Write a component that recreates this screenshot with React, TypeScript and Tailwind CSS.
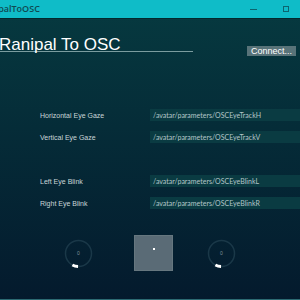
import React from 'react'

function Dial() {
  return (
    <svg width="27" height="27" viewBox="0 0 27 27" className="overflow-visible shrink-0">
      <circle cx="13.5" cy="13.5" r="13" fill="none" stroke="#1a3848" strokeWidth="1.5" />
      <path d="M13.05 26.49 A13 13 0 0 1 7.4 24.98" fill="none" stroke="#ffffff" strokeWidth="3" />
      <text x="13.5" y="15.3" textAnchor="middle" fontSize="5" fill="#7d8f99" fontFamily="Liberation Sans, sans-serif">0</text>
    </svg>
  )
}

const rows = [
  { label: 'Horizontal Eye Gaze', path: '/avatar/parameters/OSCEyeTrackH', mt: 'mt-[53px]' },
  { label: 'Vertical Eye Gaze', path: '/avatar/parameters/OSCEyeTrackV', mt: 'mt-[10px]' },
  { label: 'Left Eye Blink', path: '/avatar/parameters/OSCEyeBlinkL', mt: 'mt-[32px]' },
  { label: 'Right Eye Blink', path: '/avatar/parameters/OSCEyeBlinkR', mt: 'mt-[10px]' },
]

export default function App() {
  return (
    <div className="w-[300px] h-[300px] overflow-hidden flex flex-col bg-gradient-to-b from-[#063a40] to-[#041a2d] font-['Liberation_Sans',sans-serif]">
      <div className="h-[19px] shrink-0 bg-[#0fbcc8] flex items-center border-b border-[#03282d]">
        <span className="-ml-[21px] text-[9px] text-[#0f4a52] font-['Open_Sans',sans-serif] font-semibold whitespace-nowrap">RanipalToOSC</span>
        <div className="ml-auto flex items-center">
          <div className="w-[7px] h-px bg-[#0b6670]" />
          <div className="ml-[26px] mr-[11px] w-[6px] h-[6px] border border-[#0b6670]" />
        </div>
      </div>

      <div className="flex-1 flex flex-col border-b border-[#2c6a72]">
        <div className="mt-[19px] flex items-start">
          <div className="w-[193px] h-[14px] leading-[14px] text-[17px] text-white border-b border-[#7b9c9f] whitespace-nowrap">
            <span className="-ml-[1px]">Ranipal To OSC</span>
          </div>
          <button className="mt-[8px] ml-auto mr-[4px] w-[49px] h-[10px] bg-[#587379] text-white text-[9px] leading-[10px] text-center">
            Connect...
          </button>
        </div>

        {rows.map((r) => (
          <div key={r.label} className={`${r.mt} flex items-center h-[12px]`}>
            <div className="w-[150px] pl-[40px] pt-[2px] text-[7px] text-[#c9d6d8] whitespace-nowrap">{r.label}</div>
            <div className="flex-1 h-[12px] bg-[#0a3b42] flex items-center pl-[3px] text-[7px] text-[#b4c6c9] font-['Lato',sans-serif] whitespace-nowrap">
              {r.path}
            </div>
          </div>
        ))}

        <div className="mt-[26px] flex items-center">
          <div className="ml-[65px]">
            <Dial />
          </div>
          <div className="ml-[42px] w-[39px] h-[36px] bg-[#5a6b76] border border-[#66777f] flex justify-center pt-[12px]">
            <div className="w-[2px] h-[2px] bg-white" />
          </div>
          <div className="ml-[35px]">
            <Dial />
          </div>
        </div>
      </div>
    </div>
  )
}
